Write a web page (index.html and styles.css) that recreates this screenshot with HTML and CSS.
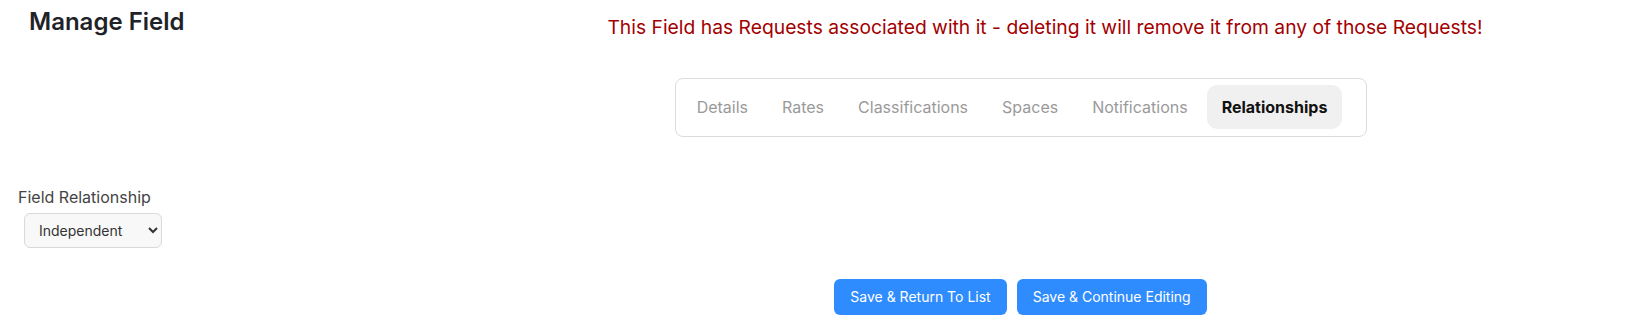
FILE: index.html
```html
<!DOCTYPE html>
<html lang="en">
<head>
<meta charset="utf-8">
<title>Manage Field</title>
<link rel="stylesheet" href="styles.css">
</head>
<body>
<div class="page">
  <h1 class="title">Manage Field</h1>
  <p class="warning">This Field has Requests associated with it - deleting it will remove it from any of those Requests!</p>

  <div class="spacer"></div>
  <nav class="tabs-wrap">
    <div class="tabs">
      <span class="tab">Details</span>
      <span class="tab">Rates</span>
      <span class="tab">Classifications</span>
      <span class="tab">Spaces</span>
      <span class="tab">Notifications</span>
      <span class="tab active">Relationships</span>
    </div>
  </nav>

  <div class="form">
    <label class="label" for="rel">Field Relationship</label>
    <select class="select" id="rel">
      <option>Independent</option>
      <option>Dependent</option>
    </select>
  </div>

  <div class="spacer"></div>
  <div class="actions">
    <button class="btn">Save &amp; Return To List</button>
    <button class="btn">Save &amp; Continue Editing</button>
  </div>
</div>
</body>
</html>
```

FILE: styles.css
```css
html, body {
  margin: 0;
  padding: 0;
  background: #ffffff;
}

body {
  font-family: Inter, "Noto Sans", "Liberation Sans", sans-serif;
  color: #212529;
}

.page {
  display: grid;
  grid-template-columns: 417px 1fr;
  align-items: start;
}

.title {
  margin: 7px 0 0 29px;
  font-size: 24px;
  line-height: 29px;
  font-weight: 600;
  color: #1f2328;
}

.warning {
  margin: 0;
  padding: 13px 0 0 48px;
  text-align: center;
  font-size: 19.3px;
  line-height: 28px;
  color: #a30000;
}

.tabs-wrap {
  display: flex;
  justify-content: center;
  margin-top: 37px;
}

.tabs {
  display: flex;
  gap: 4px;
  padding: 6px 24px 7px 6px;
  border: 1px solid #dcdcdc;
  border-radius: 8px;
  background: #fff;
}

.tab {
  padding: 11px 15px 10px;
  font-size: 16px;
  line-height: 23px;
  color: #9a9a9a;
  border-radius: 10px;
}

.tab.active {
  background: #f0f0f0;
  color: #111;
  font-weight: 700;
}

.form {
  grid-column: 1 / -1;
  display: flex;
  flex-direction: column;
  align-items: flex-start;
  padding: 48px 0 0 18px;
}

.label {
  font-size: 16px;
  line-height: 24px;
  color: #444;
}

.select {
  margin: 4px 0 0 6px;
  width: 138px;
  height: 35px;
  padding: 0 10px;
  font-family: Inter, "Noto Sans", "Liberation Sans", sans-serif;
  font-size: 14px;
  color: #333;
  background: #f8f8f8;
  border: 1px solid #d9d9d9;
  border-radius: 6px;
}

.actions {
  display: flex;
  justify-content: center;
  gap: 10px;
  margin: 31px 0 0 -1px;
}

.btn {
  padding: 8px 16px;
  font-family: Inter, "Noto Sans", "Liberation Sans", sans-serif;
  font-size: 14px;
  line-height: 20px;
  font-weight: 400;
  color: #fff;
  background: #2f8cff;
  border: none;
  border-radius: 6px;
}
```
